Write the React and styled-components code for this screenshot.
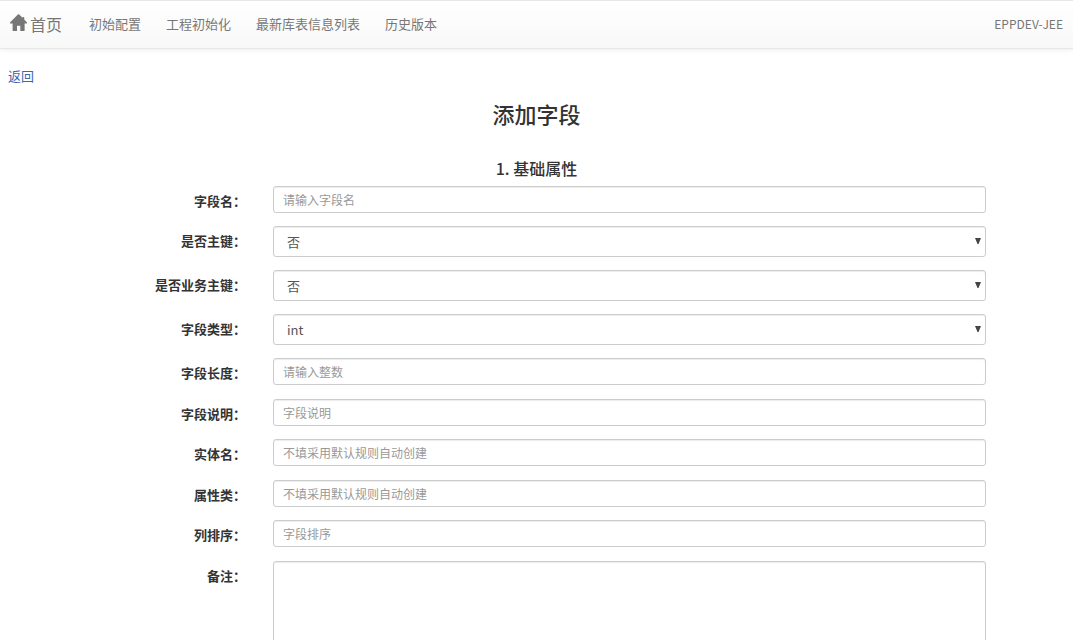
import React from "react";
import styled, { createGlobalStyle } from "styled-components";

const GlobalStyle = createGlobalStyle`
  *, *::before, *::after { box-sizing: border-box; }
  body {
    margin: 0;
    background: #fff;
    color: #333;
    font-family: "Noto Sans CJK SC", sans-serif;
    font-size: 13px;
    line-height: 18px;
  }
  input, select, textarea { font-family: inherit; }
`;

const Navbar = styled.nav`
  display: flex;
  align-items: center;
  justify-content: space-between;
  height: 49px;
  padding: 0 10px 2px;
  border: solid #e7e7e7;
  border-width: 1px 0;
  background: linear-gradient(#fff, #f8f8f8);
  box-shadow: 0 1px 5px rgba(0, 0, 0, 0.075);
`;

const Brand = styled.a`
  display: flex;
  align-items: center;
  gap: 3px;
  color: #777;
  font-size: 16px;
  text-decoration: none;
`;

const HomeIcon = styled.svg`
  width: 17px;
  height: 17px;
  margin-bottom: 2px;
  fill: currentColor;
`;

const NavGroup = styled.div`
  display: flex;
  align-items: center;
  gap: 27px;
`;

const NavList = styled.ul`
  display: flex;
  gap: 25px;
  margin: 0;
  padding: 0;
  list-style: none;
`;

const NavLink = styled.a`
  color: #777;
  font-size: ${(p) => (p.$small ? "12px" : "13px")};
  text-decoration: none;
`;

const BackLink = styled.a`
  display: inline-block;
  margin: 18px 8px 0;
  color: #4065b0;
  text-decoration: none;
`;

const Title = styled.h3`
  margin: 15px 0 0;
  font-size: 22px;
  font-weight: 500;
  line-height: 26px;
  text-align: center;
`;

const SectionTitle = styled.h4`
  margin: 32px 0 0;
  font-size: 16px;
  font-weight: 500;
  line-height: 20px;
  text-align: center;
`;

const Form = styled.form`
  padding: 8px 87px 40px 0;
`;

const Row = styled.div`
  display: grid;
  grid-template-columns: 246px minmax(0, 1fr);
  column-gap: 27px;
  align-items: start;
  margin-bottom: 13px;
`;

const FieldGroup = styled.div`
  & > ${Row}:nth-child(odd) {
    margin-bottom: ${(p) => (p.$loose ? "14px" : "13px")};
  }
`;

const Label = styled.label`
  padding-top: 6px;
  font-weight: 700;
  text-align: right;
`;

const controlStyle = `
  display: block;
  width: 100%;
  border: 1px solid #ccc;
  border-radius: 3px;
  background: #fff;
  box-shadow: inset 0 1px 1px rgba(0, 0, 0, 0.075);
  color: #555;
  outline: none;
`;

const TextInput = styled.input`
  ${controlStyle}
  height: 27px;
  padding: 0 9px;
  font-size: 12px;
  &::placeholder { color: #999; opacity: 1; }
`;

const TextArea = styled.textarea`
  ${controlStyle}
  height: 180px;
  padding: 4px 9px;
  font-size: 12px;
  resize: none;
`;

const SelectBox = styled.div`
  position: relative;
`;

const Select = styled.select`
  ${controlStyle}
  appearance: none;
  height: 31px;
  padding: 0 13px;
  font-size: 13px;
`;

const Arrow = styled.svg`
  position: absolute;
  top: 12px;
  right: 5px;
  width: 6px;
  height: 6px;
  fill: #444;
  pointer-events: none;
`;

const navItems = ["初始配置", "工程初始化", "最新库表信息列表", "历史版本"];

const keyFields = [
  { id: "columnName", label: "字段名", placeholder: "请输入字段名" },
  { id: "primaryKey", label: "是否主键", options: ["否", "是"] },
  { id: "businessKey", label: "是否业务主键", options: ["否", "是"] },
  { id: "columnType", label: "字段类型", options: ["int", "varchar", "datetime"] },
];

const detailFields = [
  { id: "columnLength", label: "字段长度", placeholder: "请输入整数" },
  { id: "description", label: "字段说明", placeholder: "字段说明" },
  { id: "entityName", label: "实体名", placeholder: "不填采用默认规则自动创建" },
  { id: "propertyClass", label: "属性类", placeholder: "不填采用默认规则自动创建" },
  { id: "sortOrder", label: "列排序", placeholder: "字段排序" },
  { id: "remark", label: "备注", multiline: true },
];

function Control({ id, options, multiline, placeholder }) {
  if (options) {
    return (
      <SelectBox>
        <Select id={id} name={id}>
          {options.map((o) => (
            <option key={o}>{o}</option>
          ))}
        </Select>
        <Arrow viewBox="0 0 6 6" aria-hidden="true">
          <path d="M0 0H6L3.5 6H2.5Z" />
        </Arrow>
      </SelectBox>
    );
  }
  if (multiline) return <TextArea id={id} name={id} />;
  return <TextInput id={id} name={id} type="text" placeholder={placeholder} />;
}

function Field(props) {
  return (
    <Row>
      <Label htmlFor={props.id}>{props.label}：</Label>
      <Control {...props} />
    </Row>
  );
}

export default function App() {
  return (
    <>
      <GlobalStyle />
      <Navbar>
        <NavGroup>
          <Brand href="#">
            <HomeIcon viewBox="0 0 17 17" aria-hidden="true">
              <path d="M8.1 0.3Q8.5 0 8.9 0.3L12.8 4.1V3H14.2V5.6L17 8.6Q17.2 9.6 16.4 9.6H14.6V16.4Q14.6 17 14.1 17H10.3V11.8H7V17H3.1Q2.6 17 2.6 16.4V9.6H0.6Q-0.2 9.6 0 8.6Z" />
            </HomeIcon>
            首页
          </Brand>
          <NavList>
            {navItems.map((item) => (
              <li key={item}>
                <NavLink href="#">{item}</NavLink>
              </li>
            ))}
          </NavList>
        </NavGroup>
        <NavLink href="#" $small>EPPDEV-JEE</NavLink>
      </Navbar>
      <main>
        <BackLink href="#">返回</BackLink>
        <Title>添加字段</Title>
        <SectionTitle>1. 基础属性</SectionTitle>
        <Form>
          <FieldGroup>
            {keyFields.map((f) => (
              <Field key={f.id} {...f} />
            ))}
          </FieldGroup>
          <FieldGroup $loose>
            {detailFields.map((f) => (
              <Field key={f.id} {...f} />
            ))}
          </FieldGroup>
        </Form>
      </main>
    </>
  );
}
